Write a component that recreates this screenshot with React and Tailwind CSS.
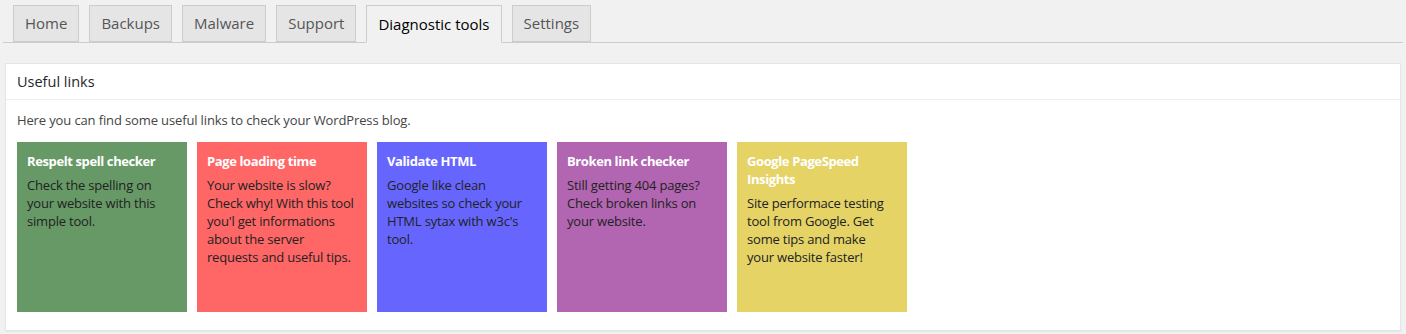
const tabs = ["Home", "Backups", "Malware", "Support", "Diagnostic tools", "Settings"]

const links = [
  {
    title: "Respelt spell checker",
    text: "Check the spelling on your website with this simple tool.",
    bg: "bg-[#669966]",
  },
  {
    title: "Page loading time",
    text: "Your website is slow? Check why! With this tool you'l get informations about the server requests and useful tips.",
    bg: "bg-[#ff6666]",
  },
  {
    title: "Validate HTML",
    text: "Google like clean websites so check your HTML sytax with w3c's tool.",
    bg: "bg-[#6666ff]",
  },
  {
    title: "Broken link checker",
    text: "Still getting 404 pages? Check broken links on your website.",
    bg: "bg-[#b266b2]",
  },
  {
    title: "Google PageSpeed Insights",
    text: "Site performace testing tool from Google. Get some tips and make your\u00a0website faster!",
    bg: "bg-[#e5d366]",
  },
]

export default function App() {
  return (
    <div className="min-h-screen bg-[#f1f1f1] font-['Open_Sans',sans-serif] pb-4">
      <div className="mx-[3px] pt-[5px] pl-[10px] flex gap-[10px] border-b border-[#ccc]">
        {tabs.map((t) => {
          const active = t === "Diagnostic tools"
          return (
            <div
              key={t}
              className={
                active
                  ? "h-[38px] -mb-px px-[11px] flex items-center border border-[#ccc] border-b-[#f1f1f1] bg-[#f1f1f1] text-[15px] text-black"
                  : "h-[37px] px-[11px] flex items-center border border-[#ccc] bg-[#e5e5e5] text-[15px] text-[#555]"
              }
            >
              {t}
            </div>
          )
        })}
      </div>

      <div className="mx-[5px] mt-[20px] bg-white border border-[#e5e5e5] shadow-[0_1px_1px_rgba(0,0,0,0.04)]">
        <div className="h-[36px] px-[11px] flex items-center border-b border-[#eee] text-[14.5px] text-[#23282d]">
          Useful links
        </div>
        <div className="px-[11px] pt-[11px] pb-[18px]">
          <p className="text-[13px] leading-[18px] text-[#444] tracking-[-0.01em]">
            Here you can find some useful links to check your WordPress blog.
          </p>
          <div className="mt-[13px] flex gap-[10px]">
            {links.map((l) => (
              <div key={l.title} className={`w-[170px] h-[170px] px-[10px] pt-[10px] ${l.bg}`}>
                <div className="text-[13px] leading-[18px] font-bold text-white tracking-[-0.03em]">
                  {l.title}
                </div>
                <div className="mt-[6px] text-[13px] leading-[18px] text-[#222] tracking-[-0.015em]">
                  {l.text}
                </div>
              </div>
            ))}
          </div>
        </div>
      </div>
    </div>
  )
}
